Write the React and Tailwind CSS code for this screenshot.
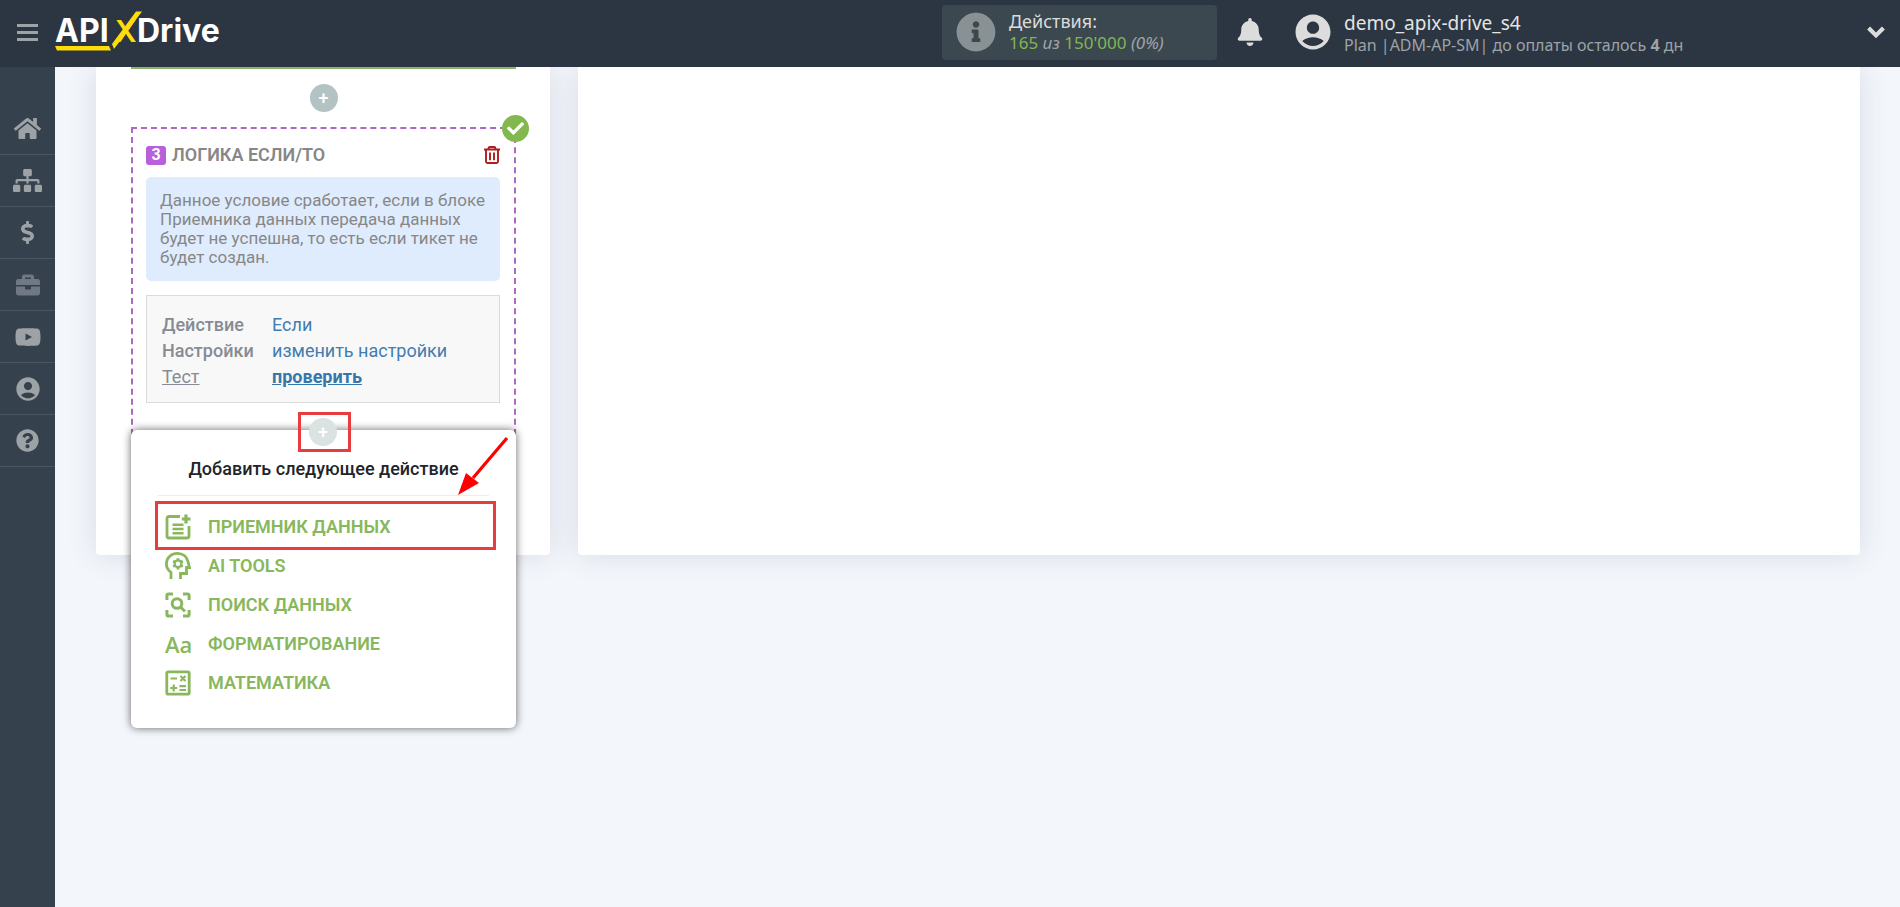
import React from 'react';
import { FaHome, FaSitemap, FaDollarSign, FaBriefcase, FaQuestionCircle, FaInfoCircle, FaBell, FaCheck } from 'react-icons/fa';
import { MdAccountCircle } from 'react-icons/md';

const YoutubeIcon = () => (
  <svg width="26" height="18" viewBox="0 0 26 18" fill="currentColor">
    <path fillRule="evenodd" d="M4 0.5C9 0 17 0 22 .5C24.500 .8 25.500 3 25.500 9S24.500 17.200 22 17.500C17 18 9 18 4 17.500C1.500 17.200 .5 15 .5 9S1.500 .8 4 .5ZM10.500 5.500V12.500L17 9Z" />
  </svg>
);

const ChevronIcon = () => (
  <svg width="18" height="13" viewBox="0 0 18 13" fill="none" stroke="currentColor" strokeWidth="4.200">
    <path d="M1.600 2L9 9.400L16.400 2" />
  </svg>
);

const TrashIcon = () => (
  <svg width="16" height="18" viewBox="0 0 16 18" fill="none" stroke="currentColor" strokeWidth="1.900">
    <path d="M0 3.500H16M4.500 3.500V2.500Q4.500 1 6 1H10Q11.500 1 11.500 2.500V3.500M2 3.500V15.500Q2 17 3.500 17H12.500Q14 17 14 15.500V3.500M6 6.500V14.200M10 6.500V14.200" />
  </svg>
);

const DataIcon = () => (
  <svg width="26" height="26" viewBox="0 0 26 26" fill="none" stroke="currentColor" strokeWidth="2.800">
    <path d="M15 2.500H4Q2 2.500 2 4.500V22Q2 24 4 24H22Q24 24 24 22V12" />
    <path d="M21 .5V9.500M16.800 5H25.500" strokeWidth="3.200" />
    <path d="M7.500 10.800H18.500M7.500 15H18.500M7.500 19.200H18.500" strokeWidth="2.600" />
  </svg>
);

const BrainIcon = () => (
  <svg width="26" height="27" viewBox="0 0 26 27" fill="none" stroke="currentColor" strokeWidth="2.800">
    <path d="M6 27V20.500Q1.400 17 1.400 11.800C1.400 5.500 6.500 1.400 12.500 1.400C18 1.400 21.800 4.800 22.800 9L24.500 15.500H21.500V21.500H15.500V27" />
    <circle cx="13" cy="11.800" r="3.400" strokeWidth="2.200" />
    <path d="M13 6.200V8.600M13 15V17.400M8.200 9L10.200 10.200M15.800 13.400L17.800 14.600M8.200 14.600L10.200 13.400M15.800 10.200L17.800 9" strokeWidth="2.800" />
  </svg>
);

const SearchIcon = () => (
  <svg width="26" height="26" viewBox="0 0 26 26" fill="none" stroke="currentColor" strokeWidth="3">
    <path d="M1.900 8V3.500Q1.900 1.900 3.500 1.900H8M18 1.900H22.500Q24.100 1.900 24.100 3.500V8M24.100 18V22.500Q24.100 24.100 22.500 24.100H18M8 24.100H3.500Q1.900 24.100 1.900 22.500V18" />
    <circle cx="12" cy="11.500" r="4.800" />
    <path d="M15.500 15L20 19.500" />
  </svg>
);

const LettersIcon = () => <span className="font-['Open_Sans','Lato',sans-serif] text-[22px] leading-6 font-semibold">Aa</span>;

const MathIcon = () => (
  <svg width="26" height="26" viewBox="0 0 26 26" fill="none" stroke="currentColor" strokeWidth="2.800">
    <rect x="1.800" y="1.800" width="22.400" height="22.400" rx="1.500" />
    <path d="M5.500 8.500H12M15.500 6L20.500 11M20.500 6L15.500 11M8.700 14.500V21.500M5.200 18H12.200M14.500 16.200H21M14.500 20H21" strokeWidth="2.200" />
  </svg>
);

const navItems = [
  { label: 'Главная', icon: <FaHome size={27} /> },
  { label: 'Связи', icon: <FaSitemap size={29} /> },
  { label: 'Оплата', icon: <FaDollarSign size={23} /> },
  { label: 'Проекты', icon: <FaBriefcase size={24} />, muted: true },
  { label: 'Видео', icon: <YoutubeIcon /> },
  { label: 'Профиль', icon: <MdAccountCircle size={28} /> },
  { label: 'Помощь', icon: <FaQuestionCircle size={23} /> },
];

const actions = [
  { label: 'ПРИЕМНИК ДАННЫХ', icon: <DataIcon /> },
  { label: 'AI TOOLS', icon: <BrainIcon /> },
  { label: 'ПОИСК ДАННЫХ', icon: <SearchIcon /> },
  { label: 'ФОРМАТИРОВАНИЕ', icon: <LettersIcon /> },
  { label: 'МАТЕМАТИКА', icon: <MathIcon /> },
];

function Logo() {
  return (
    <a href="#" aria-label="APIXDrive" className="ml-4">
      <svg width="172" height="44" viewBox="0 0 172 44" className="font-['Inter',sans-serif]">
        <text x="1" y="32" fontSize="32" fontWeight="700" fill="#fff">API</text>
        <text x="61" y="32" fontSize="30" fontWeight="600" fill="#fedb0a">X</text>
        <text x="83" y="32" fontSize="32" fontWeight="700" fill="#fff">Drive</text>
        <path d="M82 1.500H88L60 39L58 34Z" fill="#fedb0a" />
        <path d="M1 36H55L57 40.500H3Z" fill="#fedb0a" />
      </svg>
    </a>
  );
}

function Header() {
  return (
    <header className="relative z-20 flex h-[67px] items-center bg-[#2b3642] pb-[3px] font-['Noto_Sans','Open_Sans',sans-serif]">
      <button aria-label="Меню" className="ml-[17px] flex flex-col gap-1 text-[#9da2a6]">
        <span className="h-[3px] w-[21px] bg-current" />
        <span className="h-[3px] w-[21px] bg-current" />
        <span className="h-[3px] w-[21px] bg-current" />
      </button>
      <Logo />
      <div className="ml-auto flex items-center">
        <div className="flex h-[55px] w-[275px] items-center rounded bg-[#3b4850] pl-[14px]">
          <FaInfoCircle size={40} className="text-[#8a9194]" />
          <div className="ml-[13px] pb-px text-[17px] leading-[22px] text-[#a0a5a8]">
            <div className="text-lg leading-[22px] text-[#dcdcdc]">Действия:</div>
            <div>
              <span className="text-[#83b654]">165</span> <i>из</i> <span className="text-[#83b654]">150'000</span> <i>(0%)</i>
            </div>
          </div>
        </div>
        <button aria-label="Уведомления" className="ml-[19px] text-[#dcdcdc]">
          <FaBell size={28} />
        </button>
        <MdAccountCircle size={42} className="ml-[28px] text-[#dcdcdc]" />
        <div className="ml-[10px] w-[523px] pt-[3px] text-base leading-[22px] text-[#9da3a7]">
          <div className="text-[19px] text-[#e4e4e4]">demo_apix-drive_s4</div>
          <div>Plan |ADM-AP-SM| до оплаты осталось <b>4</b> дн</div>
        </div>
        <button aria-label="Открыть меню" className="mr-[15px] text-[#dcdcdc]">
          <ChevronIcon />
        </button>
      </div>
    </header>
  );
}

function Sidebar() {
  return (
    <nav className="w-[55px] shrink-0 bg-[#36414e] pt-9">
      {navItems.map((item) => (
        <a
          key={item.label}
          href="#"
          aria-label={item.label}
          className={`flex h-[52px] items-center justify-center border-b border-[#4a5663] ${item.muted ? 'text-[#6f7883]' : 'text-[#9da2a6]'}`}
        >
          {item.icon}
        </a>
      ))}
    </nav>
  );
}

function PlusButton({ faded }) {
  return (
    <button
      aria-label="Добавить"
      className={`flex size-7 items-center justify-center rounded-full text-lg leading-none font-medium text-white ${faded ? 'bg-[#dae2e2]' : 'bg-[#b3c3c4]'}`}
    >
      +
    </button>
  );
}

function ActionMenu() {
  return (
    <div className="absolute -inset-x-[2px] top-[301px] rounded-md bg-white px-[27px] pt-[25px] pb-[26px] shadow-[0_0_8px_rgba(0,0,0,0.6)]">
      {/* highlighted add button */}
      <div className="absolute -top-[18px] left-[167px] flex h-10 w-[53px] items-center justify-center border-3 border-[#e93c3e] pr-[3px]">
        <PlusButton faded />
      </div>
      <h3 className="border-b border-[#ececec] pb-[12px] text-center text-lg leading-7 font-medium text-[#212529]">Добавить следующее действие</h3>
      <ul className="pt-[11px]">
        {actions.map((action) => (
          <li key={action.label}>
            <button className="flex h-[39px] w-full items-center pl-[7px] text-lg font-semibold text-[#88b75c]">
              <span className="flex w-[43px] items-center">{action.icon}</span>
              {action.label}
            </button>
          </li>
        ))}
      </ul>
      {/* highlight and arrow over the first action */}
      <div className="pointer-events-none absolute top-[71px] right-5 left-6 h-[49px] border-3 border-[#e93c3e]" />
      <svg width="52" height="60" viewBox="0 0 52 60" className="pointer-events-none absolute top-[6px] right-[7px]">
        <path d="M50 2L16 42" stroke="#f00" strokeWidth="3.200" />
        <path d="M1 59L9 37L22 47Z" fill="#f00" />
      </svg>
    </div>
  );
}

function LogicStep() {
  return (
    <section className="relative h-[318px] border-2 border-dashed border-[#ab69c2] pt-4 pr-[14px] pl-[13px]">
      <span className="absolute -top-[14px] -right-[15px] flex size-[27px] items-center justify-center rounded-full bg-[#83b84f] text-white">
        <FaCheck size={17} />
      </span>
      <div className="flex h-5 items-center">
        <span className="flex h-[19px] w-5 items-center justify-center rounded-[3px] bg-[#b85fdc] text-base font-bold text-white">3</span>
        <h2 className="ml-[6px] text-lg font-semibold text-[#878787]">ЛОГИКА ЕСЛИ/ТО</h2>
        <button aria-label="Удалить" className="ml-auto text-[#b11c1c]">
          <TrashIcon />
        </button>
      </div>
      <p className="mt-3 rounded-[5px] bg-[#dfecfd] p-[14px] text-[17px] leading-[19px] text-[#878787]">
        Данное условие сработает, если в блоке Приемника данных передача данных будет не успешна, то есть если тикет не будет создан.
      </p>
      <dl className="mt-[14px] grid grid-cols-[110px_1fr] border border-[#dadbdb] bg-[#f8f8f8] px-[15px] pt-4 pb-3 text-lg leading-[26px] text-[#868b94]">
        <dt className="font-medium">Действие</dt>
        <dd><a href="#" className="text-[#417dae]">Если</a></dd>
        <dt className="font-medium">Настройки</dt>
        <dd><a href="#" className="text-[#417dae]">изменить настройки</a></dd>
        <dt className="underline">Тест</dt>
        <dd><a href="#" className="font-bold text-[#3676ad] underline">проверить</a></dd>
      </dl>
      <ActionMenu />
    </section>
  );
}

export default function App() {
  return (
    <div className="flex min-h-screen flex-col overflow-hidden bg-[#f3f6fb] font-['Roboto',sans-serif]">
      <Header />
      <div className="flex grow">
        <Sidebar />
        <main className="flex grow items-stretch gap-7 self-start pr-10 pl-[41px]">
          <div className="w-[454px] shrink-0 rounded-b bg-white pr-[34px] pb-[110px] pl-[35px] shadow-[0_0_30px_rgba(60,70,90,0.14)]">
            <div className="h-[2px] bg-[#8ab468]" />
            <div className="flex justify-center pt-[15px] pb-[15px]">
              <PlusButton />
            </div>
            <LogicStep />
          </div>
          <div className="grow rounded-b bg-white shadow-[0_0_30px_rgba(60,70,90,0.14)]" />
        </main>
      </div>
    </div>
  );
}
